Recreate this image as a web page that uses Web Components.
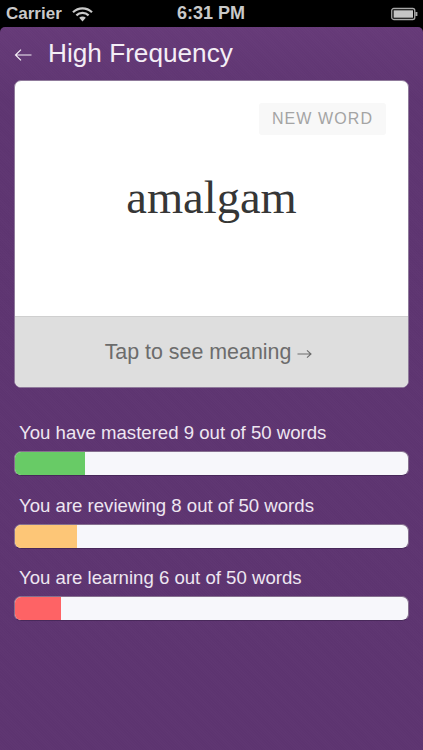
<!DOCTYPE html>
<html>
<head>
<meta charset="utf-8">
<style>
  html, body { margin: 0; padding: 0; background: #000; }
  body { width: 423px; height: 750px; overflow: hidden; font-family: "Liberation Sans", Arial, sans-serif; }
</style>
</head>
<body>
<status-bar></status-bar>
<app-screen>
  <nav-header title="High Frequency"></nav-header>
  <word-card word="amalgam" tag="NEW WORD" action="Tap to see meaning"></word-card>
  <progress-list>
    <progress-row label="You have mastered 9 out of 50 words" color="#68cb66" fill="70"></progress-row>
    <progress-row label="You are reviewing 8 out of 50 words" color="#fdc677" fill="62"></progress-row>
    <progress-row label="You are learning 6 out of 50 words" color="#fe6365" fill="46"></progress-row>
  </progress-list>
</app-screen>

<script>
class StatusBar extends HTMLElement {
  constructor() {
    super()
    this.attachShadow({ mode: 'open' })
  }

  connectedCallback() {
    this.shadowRoot.innerHTML = `
      <style>
        :host {
          display: grid;
          grid-template-columns: 1fr auto 1fr;
          align-items: center;
          height: 27px;
          padding: 0 5px 0 6px;
          box-sizing: border-box;
          background: #000;
          color: #c9c9c9;
          font: bold 17px "Liberation Sans", Arial, sans-serif;
        }
        .left { display: flex; align-items: center; gap: 10px; }
        .right { display: flex; justify-content: flex-end; }
        .time { font-size: 18px; padding-right: 2px; }
      </style>
      <div class="left">
        <span>Carrier</span>
        <svg width="21" height="16" viewBox="0 0 21 16">
          <path d="M1 6.2a13.5 13.5 0 0 1 19 0" fill="none" stroke="#c9c9c9" stroke-width="2.2"/>
          <path d="M4.4 9.4a8.7 8.7 0 0 1 12.2 0" fill="none" stroke="#c9c9c9" stroke-width="2.2"/>
          <path d="M7.2 11.8 a4.6 4.6 0 0 1 6.6 0 L10.5 15.4 Z" fill="#c9c9c9"/>
        </svg>
      </div>
      <span class="time">6:31 PM</span>
      <div class="right">
        <svg width="27" height="14" viewBox="0 0 27 14">
          <rect x="0.75" y="1.5" width="23" height="11" rx="2" fill="none" stroke="#a8a8a8" stroke-width="1.3"/>
          <rect x="2.6" y="3.3" width="19.4" height="7.4" fill="#c4c4c4"/>
          <rect x="24.4" y="5" width="2" height="4" fill="#a8a8a8"/>
        </svg>
      </div>
    `
  }
}

class AppScreen extends HTMLElement {
  constructor() {
    super()
    this.attachShadow({ mode: 'open' })
  }

  connectedCallback() {
    this.shadowRoot.innerHTML = `
      <style>
        :host {
          display: block;
          height: 723px;
          box-sizing: border-box;
          padding: 0 14px;
          border-radius: 5px 5px 0 0;
          background:
            repeating-linear-gradient(45deg, rgba(255,255,255,.012) 0 1px, transparent 1px 2px),
            linear-gradient(#663a78, #5e3571 10%, #5d3470);
        }
      </style>
      <slot></slot>
    `
  }
}

class NavHeader extends HTMLElement {
  constructor() {
    super()
    this.attachShadow({ mode: 'open' })
  }

  connectedCallback() {
    this.shadowRoot.innerHTML = `
      <style>
        :host {
          display: flex;
          align-items: center;
          gap: 16px;
          height: 53px;
          color: #f4eef6;
          font: 26.2px "Liberation Sans", Arial, sans-serif;
        }
        svg { display: block; margin-top: 3px; }
      </style>
      <svg width="18" height="14" viewBox="0 0 18 14">
        <path d="M17.5 7H1.5M7 1.6 1.5 7 7 12.4" fill="none" stroke="#f4eef6" stroke-width="1.2"/>
      </svg>
      <span>${this.getAttribute('title')}</span>
    `
  }
}

class WordCard extends HTMLElement {
  constructor() {
    super()
    this.attachShadow({ mode: 'open' })
  }

  connectedCallback() {
    this.shadowRoot.innerHTML = `
      <style>
        :host {
          display: block;
          height: 308px;
          box-sizing: border-box;
          border: 1px solid #8f7a9b;
          border-radius: 7px;
          overflow: hidden;
          background: #fff;
        }
        .face {
          height: 235px;
          box-sizing: border-box;
          padding: 22px 22px 0;
          display: flex;
          flex-direction: column;
          align-items: flex-end;
        }
        .tag {
          height: 32px;
          width: 127px;
          display: flex;
          align-items: center;
          justify-content: center;
          border-radius: 3px;
          background: #f8f8f8;
          color: #a4a4a4;
          font: 16px "Liberation Sans", Arial, sans-serif;
          letter-spacing: 1.1px;
        }
        .word {
          align-self: center;
          margin-top: 35px;
          color: #363636;
          font: 46.5px/56px "Liberation Serif", "Times New Roman", serif;
        }
        .action {
          height: 71px;
          box-sizing: border-box;
          padding-right: 6px;
          display: flex;
          align-items: center;
          justify-content: center;
          gap: 6px;
          border-top: 1px solid #cfcfcf;
          background: #dedede;
          color: #6c6c6c;
          font: 21.4px "Liberation Sans", Arial, sans-serif;
        }
        .arrow { display: block; margin-top: 3px; }
      </style>
      <div class="face">
        <span class="tag">${this.getAttribute('tag')}</span>
        <span class="word">${this.getAttribute('word')}</span>
      </div>
      <div class="action">
        <span>${this.getAttribute('action')}</span>
        <svg class="arrow" width="15" height="10" viewBox="0 0 15 10">
          <path d="M0.5 5H14M10 1.4 14 5 10 8.6" fill="none" stroke="#6c6c6c" stroke-width="1.1"/>
        </svg>
      </div>
    `
  }
}

class ProgressList extends HTMLElement {
  constructor() {
    super()
    this.attachShadow({ mode: 'open' })
  }

  connectedCallback() {
    this.shadowRoot.innerHTML = `
      <style>
        :host {
          display: flex;
          flex-direction: column;
          gap: 17.5px;
          margin-top: 33px;
        }
      </style>
      <slot></slot>
    `
  }
}

class ProgressRow extends HTMLElement {
  constructor() {
    super()
    this.attachShadow({ mode: 'open' })
  }

  connectedCallback() {
    const color = this.getAttribute('color')
    const fill = this.getAttribute('fill')
    this.shadowRoot.innerHTML = `
      <style>
        :host {
          display: flex;
          flex-direction: column;
          gap: 6px;
        }
        .label {
          padding-left: 5px;
          color: #eee6f1;
          font: 18.6px/24px "Liberation Sans", Arial, sans-serif;
        }
        .track {
          height: 25px;
          box-sizing: border-box;
          display: flex;
          overflow: hidden;
          border: 1px solid #86708f;
          border-bottom-color: #48285a;
          border-radius: 7px;
          background: #f7f7fb;
        }
        .bar { width: ${fill}px; background: ${color}; }
      </style>
      <div class="label">${this.getAttribute('label')}</div>
      <div class="track"><div class="bar"></div></div>
    `
  }
}

customElements.define('status-bar', StatusBar)
customElements.define('app-screen', AppScreen)
customElements.define('nav-header', NavHeader)
customElements.define('word-card', WordCard)
customElements.define('progress-list', ProgressList)
customElements.define('progress-row', ProgressRow)
</script>
</body>
</html>
